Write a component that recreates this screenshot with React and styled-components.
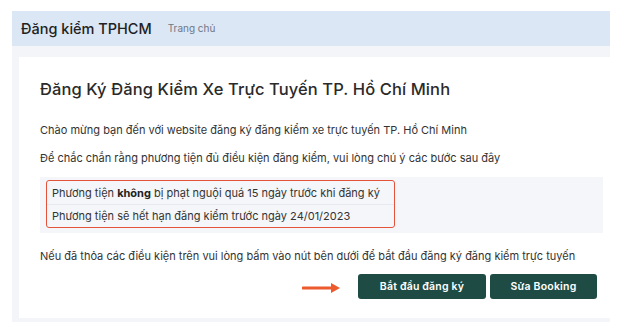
import React from 'react';
import styled, { createGlobalStyle } from 'styled-components';

const Global = createGlobalStyle`
  html, body { margin: 0; padding: 0; background: #ffffff; }
  body { font-family: 'Inter', 'Noto Sans', sans-serif; color: #2d2d2d; }
  * { box-sizing: border-box; }
`;

const Page = styled.div`
  padding: 11px 30px 0 12px;
  width: 640px;
`;

const TopBar = styled.div`
  height: 35px;
  background: #dbe7f5;
  display: flex;
  align-items: center;
  padding-left: 9px;
  gap: 16px;
`;

const Brand = styled.div`
  font-size: 14.5px;
  font-weight: 500;
  color: #222;
`;

const NavLink = styled.div`
  font-size: 10px;
  color: #707784;
  margin-top: -1px;
`;

const Body = styled.div`
  background: #f3f5f9;
  padding: 11px 0 4px 7px;
`;

const Card = styled.div`
  background: #ffffff;
  padding: 22px 7px 18px 21px;
  height: 261px;
`;

const Title = styled.h1`
  margin: 0 0 24px;
  font-size: 16.5px;
  font-weight: 500;
  color: #2a2a2a;
  letter-spacing: 0.1px;
`;

const Text = styled.p`
  margin: 0 0 ${p => p.gap ?? 14}px;
  font-size: 11px;
  line-height: 14px;
  color: #333;
`;

const Checklist = styled.div`
  background: #f5f6f9;
  padding: 3px 0 5px;
  margin-bottom: 16px;
`;

const Highlight = styled.div`
  width: 349px;
  margin-left: 6px;
  border: 1.5px solid #e6533b;
  border-radius: 3px;
`;

const Item = styled.div`
  height: 23px;
  display: flex;
  align-items: center;
  padding-left: 5px;
  font-size: 11px;
  color: #333;
  border-top: ${p => (p.first ? 'none' : '1px solid #e6e9ef')};
  b { font-weight: 700; color: #222; }
`;

const Actions = styled.div`
  display: flex;
  align-items: center;
  justify-content: flex-end;
  gap: 4px;
  margin-top: 11px;
  padding-right: 6px;
`;

const Arrow = styled.svg`
  margin-right: 12px;
  margin-top: 3px;
`;

const Button = styled.button`
  height: 25px;
  width: ${p => p.w}px;
  border: none;
  border-radius: 3px;
  background: #1e4c44;
  color: #ffffff;
  font-family: inherit;
  font-size: 10.5px;
  font-weight: 600;
  letter-spacing: 0.2px;
`;

export default function App() {
  return (
    <>
      <Global />
      <Page>
        <TopBar>
          <Brand>Đăng kiểm TPHCM</Brand>
          <NavLink>Trang chủ</NavLink>
        </TopBar>
        <Body>
          <Card>
            <Title>Đăng Ký Đăng Kiểm Xe Trực Tuyến TP. Hồ Chí Minh</Title>
            <Text>Chào mừng bạn đến với website đăng ký đăng kiểm xe trực tuyến TP. Hồ Chí Minh</Text>
            <Text gap={12}>Để chắc chắn rằng phương tiện đủ điều kiện đăng kiểm, vui lòng chú ý các bước sau đây</Text>
            <Checklist>
              <Highlight>
                <Item first>Phương tiện&nbsp;<b>không</b>&nbsp;bị phạt nguội quá 15 ngày trước khi đăng ký</Item>
                <Item>Phương tiện sẽ hết hạn đăng kiểm trước ngày 24/01/2023</Item>
              </Highlight>
            </Checklist>
            <Text gap={0}>Nếu đã thỏa các điều kiện trên vui lòng bấm vào nút bên dưới để bắt đầu đăng ký đăng kiểm trực tuyến</Text>
            <Actions>
              <Arrow width="40" height="12" viewBox="0 0 40 12">
                <path d="M1 6 H33" stroke="#ec5a2e" strokeWidth="3" strokeLinecap="round" />
                <path d="M29 1 L38 6 L29 11 Z" fill="#ec5a2e" />
              </Arrow>
              <Button w={128}>Bắt đầu đăng ký</Button>
              <Button w={107}>Sửa Booking</Button>
            </Actions>
          </Card>
        </Body>
      </Page>
    </>
  );
}
